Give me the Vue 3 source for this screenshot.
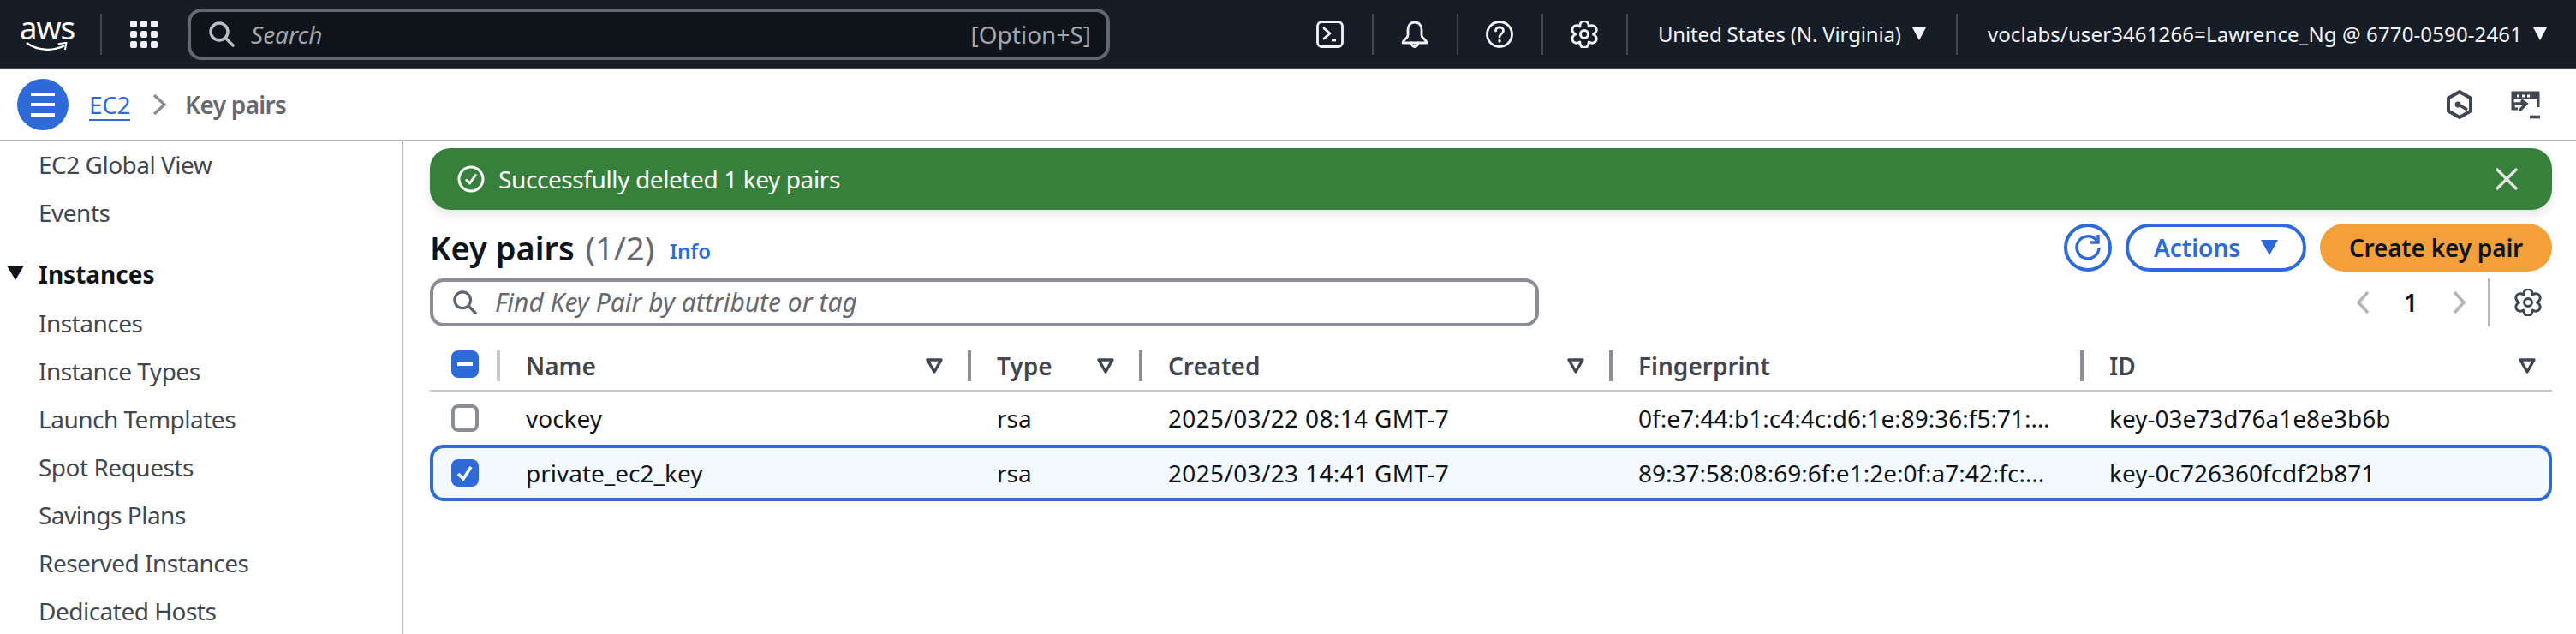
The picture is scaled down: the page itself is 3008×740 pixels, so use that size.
<template>
  <div class="page">
    <header class="topnav">
      <div class="logo">
        <span class="logo-word">aws</span>
        <svg class="logo-smile" viewBox="0 0 64 16" width="64" height="16">
          <path d="M1 2 C 16 13 40 15 58 6" fill="none" stroke="#fff" stroke-width="3" stroke-linecap="round" />
          <path d="M50 3 L62 1 L60 11" fill="none" stroke="#fff" stroke-width="2.6" stroke-linejoin="round" stroke-linecap="round" />
        </svg>
      </div>
      <span class="nav-sep first"></span>
      <svg class="apps" viewBox="0 0 32 32" width="32" height="32">
        <rect v-for="d in appDots" :key="d.k" :x="d.x" :y="d.y" width="8" height="8" rx="2" fill="#f0eff4" />
      </svg>
      <div class="top-search">
        <svg viewBox="0 0 32 32" width="32" height="32">
          <circle cx="13" cy="13" r="10" fill="none" stroke="#b6bec9" stroke-width="3.4" />
          <path d="M20.5 20.5 L29 29" stroke="#b6bec9" stroke-width="3.6" stroke-linecap="round" />
        </svg>
        <span class="top-search-ph">Search</span>
        <span class="top-search-key">[Option+S]</span>
      </div>
      <div class="nav-right">
        <div class="nav-icon">
          <svg viewBox="0 0 32 32" width="32" height="32" fill="none" stroke="#f3f3f7" stroke-width="2.8" stroke-linecap="round" stroke-linejoin="round">
            <rect x="1.5" y="1.5" width="29" height="29" rx="5" />
            <path d="M9 9 L16 15 L9 21" />
            <path d="M18 23 H23" stroke-linecap="butt" />
          </svg>
        </div>
        <span class="nav-sep"></span>
        <div class="nav-icon">
          <svg viewBox="0 0 32 32" width="32" height="32" fill="none" stroke="#f3f3f7" stroke-width="2.8" stroke-linecap="round" stroke-linejoin="round">
            <path d="M16 2 C 10 2 8 7 8 11 V 17 C 8 21 3 21 2 26 H 30 C 29 21 24 21 24 17 V 11 C 24 7 22 2 16 2 Z" />
            <path d="M12 26 C 12 32 20 32 20 26" />
          </svg>
        </div>
        <span class="nav-sep"></span>
        <div class="nav-icon">
          <svg viewBox="0 0 32 32" width="32" height="32" fill="none" stroke="#f3f3f7" stroke-width="2.8" stroke-linecap="round">
            <circle cx="16" cy="16" r="14.5" />
            <path d="M11.5 12 C 11.5 6.5 20.5 6.5 20.5 12 C 20.5 15.5 16 15.5 16 19" />
            <path d="M16 23.5 V 24" stroke-width="3.4" />
          </svg>
        </div>
        <span class="nav-sep"></span>
        <div class="nav-icon">
          <svg viewBox="0 0 32 32" width="32" height="32" fill="none" stroke="#f3f3f7" stroke-width="3" stroke-linejoin="round">
            <path :d="gearPath" />
            <circle cx="16" cy="16" r="4.5" />
          </svg>
        </div>
        <span class="nav-sep"></span>
        <span class="nav-menu region">United States (N. Virginia)<i class="caret"></i></span>
        <span class="nav-sep"></span>
        <span class="nav-menu user">voclabs/user3461266=Lawrence_Ng @ 6770-0590-2461<i class="caret"></i></span>
      </div>
    </header>

    <div class="crumbbar">
      <button class="menu-btn">
        <span></span><span></span><span></span>
      </button>
      <a class="crumb-link">EC2</a>
      <svg class="crumb-chev" viewBox="0 0 16 26" width="16" height="26">
        <path d="M2 2 L14 13 L2 24" fill="none" stroke="#8c8c94" stroke-width="3.4" />
      </svg>
      <span class="crumb-cur">Key pairs</span>
      <div class="crumb-icons">
        <svg viewBox="0 0 32 34" width="32" height="34" fill="none" stroke="#414750" stroke-width="4" stroke-linejoin="round">
          <path d="M16 2 L29 9.5 V 24.5 L16 32 L3 24.5 V 9.5 Z" />
          <path d="M15 17 L25 23" stroke-width="3.4" />
          <circle cx="14" cy="17" r="3.4" fill="#414750" stroke="none" />
        </svg>
        <svg viewBox="0 0 34 33" width="34" height="33" fill="none" stroke="#414750" stroke-width="3">
          <path d="M8 21 H2 V 2 H32 V 19" />
          <rect x="2" y="1" width="30" height="9" fill="#414750" stroke="none" />
          <path d="M7 6 H10 M13 6 H16 M19 6 H22" stroke="#fff" stroke-width="3" />
          <path d="M3 21 V 15 H 16 M12 11 L18 15 L10 23" stroke-width="3.4" />
          <path d="M22 30.5 H34" stroke-width="3.6" />
        </svg>
      </div>
    </div>

    <div class="body">
      <nav class="side">
        <template v-for="item in sideItems" :key="item.label">
          <div v-if="item.head" class="side-head"><i class="side-caret"></i>{{ item.label }}</div>
          <div v-else class="side-item">{{ item.label }}</div>
        </template>
      </nav>

      <main class="main">
        <div class="flash">
          <svg viewBox="0 0 32 32" width="32" height="32" fill="none" stroke="#fff" stroke-width="3">
            <circle cx="16" cy="16" r="14" />
            <path d="M10 16.5 L14.5 21 L22 10.5" stroke-linejoin="round" />
          </svg>
          <span class="flash-text">Successfully deleted 1 key pairs</span>
          <svg class="flash-close" viewBox="0 0 28 28" width="28" height="28">
            <path d="M2 2 L26 26 M26 2 L2 26" stroke="#e6e6e6" stroke-width="3.2" />
          </svg>
        </div>

        <div class="titlebar">
          <h1 class="title">Key pairs <span class="count">(1/2)</span></h1>
          <a class="info">Info</a>
          <div class="actions">
            <button class="btn-round">
              <svg viewBox="0 0 32 32" width="32" height="32" fill="none" stroke="#2e6ad8" stroke-width="3.4">
                <path d="M26 7.5 A 13 13 0 1 0 29 16" />
                <path d="M28 1 V 10 H 19" />
              </svg>
            </button>
            <button class="btn-actions">Actions<i class="btn-caret"></i></button>
            <button class="btn-primary">Create key pair</button>
          </div>
        </div>

        <div class="filterbar">
          <div class="filter">
            <svg viewBox="0 0 32 32" width="30" height="30">
              <circle cx="13" cy="13" r="10" fill="none" stroke="#5f6570" stroke-width="3.4" />
              <path d="M20.5 20.5 L29 29" stroke="#5f6570" stroke-width="3.6" stroke-linecap="round" />
            </svg>
            <span class="filter-ph">Find Key Pair by attribute or tag</span>
          </div>
          <div class="pager">
            <svg viewBox="0 0 16 28" width="16" height="28"><path d="M14 2 L3 14 L14 26" fill="none" stroke="#b4b4bb" stroke-width="3.6" /></svg>
            <span class="pager-num">1</span>
            <svg viewBox="0 0 16 28" width="16" height="28"><path d="M2 2 L13 14 L2 26" fill="none" stroke="#b4b4bb" stroke-width="3.6" /></svg>
            <span class="pager-sep"></span>
            <svg class="pager-gear" viewBox="0 0 32 32" width="32" height="32" fill="none" stroke="#414750" stroke-width="3" stroke-linejoin="round">
              <path :d="gearPath" />
              <circle cx="16" cy="16" r="4.5" />
            </svg>
          </div>
        </div>

        <div class="table">
          <div class="row head">
            <div class="cell check">
              <span class="box on"><i class="minus"></i></span>
            </div>
            <div v-for="col in columns" :key="col.label" class="cell hcell">
              <span>{{ col.label }}</span>
              <svg v-if="col.sortable" viewBox="0 0 20 18" width="20" height="18">
                <path d="M2 2 H18 L10 16 Z" fill="none" stroke="#414750" stroke-width="3.4" stroke-linejoin="round" />
              </svg>
            </div>
          </div>
          <div v-for="row in rows" :key="row.id" class="row data" :class="{ selected: row.selected }">
            <div class="cell check">
              <span class="box" :class="{ on: row.selected }">
                <svg v-if="row.selected" viewBox="0 0 32 32" width="32" height="32">
                  <path d="M8 17 L14 23 L23 9" fill="none" stroke="#fff" stroke-width="3.6" />
                </svg>
              </span>
            </div>
            <div class="cell">{{ row.name }}</div>
            <div class="cell">{{ row.type }}</div>
            <div class="cell date">{{ row.created }}</div>
            <div class="cell">{{ row.fingerprint }}</div>
            <div class="cell">{{ row.id }}</div>
          </div>
        </div>
      </main>
    </div>
  </div>
</template>

<script setup>
const appDots = []
for (let r = 0; r < 3; r++) {
  for (let c = 0; c < 3; c++) {
    appDots.push({ k: r + '-' + c, x: c * 12, y: r * 12 })
  }
}

// six rounded lobes, one pointing straight up
function makeGear() {
  const pt = (deg, rad) => {
    const a = (deg * Math.PI) / 180
    return (16 + rad * Math.cos(a)).toFixed(2) + ' ' + (16 + rad * Math.sin(a)).toFixed(2)
  }
  let d = 'M' + pt(-120, 10.5)
  for (let i = 0; i < 6; i++) {
    const mid = -90 + i * 60
    d += ' C' + pt(mid - 17, 18.5) + ' ' + pt(mid + 17, 18.5) + ' ' + pt(mid + 30, 10.5)
  }
  return d + ' Z'
}
const gearPath = makeGear()

const sideItems = [
  { label: 'EC2 Global View' },
  { label: 'Events' },
  { label: 'Instances', head: true },
  { label: 'Instances' },
  { label: 'Instance Types' },
  { label: 'Launch Templates' },
  { label: 'Spot Requests' },
  { label: 'Savings Plans' },
  { label: 'Reserved Instances' },
  { label: 'Dedicated Hosts' }
]

const columns = [
  { label: 'Name', sortable: true },
  { label: 'Type', sortable: true },
  { label: 'Created', sortable: true },
  { label: 'Fingerprint', sortable: false },
  { label: 'ID', sortable: true }
]

const rows = [
  {
    name: 'vockey',
    type: 'rsa',
    created: '2025/03/22 08:14 GMT-7',
    fingerprint: '0f:e7:44:b1:c4:4c:d6:1e:89:36:f5:71:…',
    id: 'key-03e73d76a1e8e3b6b',
    selected: false
  },
  {
    name: 'private_ec2_key',
    type: 'rsa',
    created: '2025/03/23 14:41 GMT-7',
    fingerprint: '89:37:58:08:69:6f:e1:2e:0f:a7:42:fc:…',
    id: 'key-0c726360fcdf2b871',
    selected: true
  }
]
</script>

<style>
html, body {
  margin: 0;
  background: #fff;
  overflow: hidden;
}
</style>

<style scoped>
.page {
  width: 3008px;
  height: 740px;
  overflow: hidden;
  display: flex;
  flex-direction: column;
  font-family: "Noto Sans", "Open Sans", sans-serif;
  font-size: 28px;
  line-height: 40px;
  color: #0f141a;
}

button {
  font-family: inherit;
  cursor: pointer;
}

/* top bar */
.topnav {
  height: 79px;
  flex: none;
  border-bottom: 2px solid #414750;
  background: #161d26;
  display: flex;
  align-items: center;
  padding-left: 23px;
  padding-right: 34px;
  color: #f3f3f7;
}

.logo {
  width: 64px;
  height: 44px;
  display: flex;
  flex-direction: column;
  align-items: center;
  margin-top: -2px;
}

.logo-word {
  font-size: 37px;
  line-height: 30px;
  height: 30px;
  color: #fff;
  letter-spacing: -1px;
}

.logo-smile {
  margin-top: 2px;
}

.nav-sep {
  width: 2px;
  height: 48px;
  background: #424650;
  flex: none;
}

.nav-sep.first {
  margin-left: 30px;
}

.apps {
  margin-left: 33px;
}

.top-search {
  margin-left: 35px;
  width: 1077px;
  height: 60px;
  box-sizing: border-box;
  border: 4px solid #656871;
  border-radius: 16px;
  background: #0f141a;
  display: flex;
  align-items: center;
  padding: 0 18px 0 20px;
}

.top-search-ph {
  margin-left: 18px;
  font-style: italic;
  color: #a4a4ad;
}

.top-search-key {
  margin-left: auto;
  color: #a4a4ad;
}

.nav-right {
  margin-left: auto;
  display: flex;
  align-items: center;
}

.nav-icon {
  width: 97px;
  display: flex;
  justify-content: center;
}

.nav-menu {
  display: flex;
  align-items: center;
  white-space: nowrap;
  font-size: 24px;
  padding-left: 35px;
}

.region {
  letter-spacing: -0.15px;
  padding-right: 35px;
}

.user {
  letter-spacing: 0.12px;
}

.caret {
  margin-left: 13px;
  width: 0;
  height: 0;
  border-left: 8px solid transparent;
  border-right: 8px solid transparent;
  border-top: 15px solid #f3f3f7;
}

/* breadcrumb bar */
.crumbbar {
  height: 82px;
  flex: none;
  border-bottom: 2px solid #b4b4bb;
  display: flex;
  align-items: center;
  padding: 0 42px 0 20px;
  background: #fff;
}

.menu-btn {
  width: 60px;
  height: 60px;
  border: none;
  border-radius: 50%;
  background: #2e6ad8;
  display: flex;
  flex-direction: column;
  align-items: center;
  justify-content: center;
  gap: 8px;
  padding: 0;
}

.menu-btn span {
  width: 28px;
  height: 4px;
  background: #fff;
}

.crumb-link {
  margin-left: 24px;
  color: #2e6ad8;
  text-decoration: underline;
  text-underline-offset: 6px;
  text-decoration-thickness: 2px;
  letter-spacing: -0.4px;
}

.crumb-chev {
  margin-left: 26px;
}

.crumb-cur {
  margin-left: 22px;
  font-weight: 600;
  letter-spacing: -0.7px;
  color: #656871;
}

.crumb-icons {
  margin-left: auto;
  display: flex;
  align-items: center;
  gap: 44px;
}

/* content */
.body {
  flex: 1;
  display: flex;
  min-height: 0;
}

.side {
  width: 469px;
  flex: none;
  border-right: 2px solid #b4b4bb;
  margin-top: -1px;
  color: #414750;
}

.side-item {
  height: 56px;
  line-height: 56px;
  padding-left: 45px;
  white-space: nowrap;
  letter-spacing: -0.5px;
}

.side-head {
  height: 57px;
  line-height: 56px;
  margin-top: 16px;
  padding-left: 45px;
  position: relative;
  font-weight: 700;
  color: #0f141a;
}

.side-caret {
  position: absolute;
  left: 8px;
  top: 18px;
  width: 0;
  height: 0;
  border-left: 10px solid transparent;
  border-right: 10px solid transparent;
  border-top: 17px solid #0f141a;
}

.main {
  flex: 1;
  min-width: 0;
  padding: 8px 28px 0 31px;
}

.flash {
  height: 72px;
  box-sizing: border-box;
  border-radius: 24px;
  background: #37803b;
  box-shadow: 0 6px 12px rgba(0, 7, 22, 0.1);
  display: flex;
  align-items: center;
  padding: 0 39px 0 32px;
  color: #fff;
  gap: 16px;
}

.flash-text {
  letter-spacing: -0.4px;
}

.flash-close {
  margin-left: auto;
}

.titlebar {
  margin-top: 16px;
  height: 56px;
  display: flex;
  align-items: center;
}

.title {
  margin: 0;
  font-size: 38px;
  line-height: 44px;
  font-weight: 600;
  color: #0f141a;
}

.count {
  font-weight: 400;
  margin-left: 3px;
  color: #656871;
}

.info {
  margin-left: 18px;
  margin-top: 8px;
  font-size: 24px;
  font-weight: 600;
  color: #2e6ad8;
}

.actions {
  margin-left: auto;
  display: flex;
  gap: 16px;
}

.btn-round {
  width: 56px;
  height: 56px;
  box-sizing: border-box;
  border: 4px solid #2e6ad8;
  border-radius: 50%;
  background: #fff;
  padding: 0;
  display: flex;
  align-items: center;
  justify-content: center;
}

.btn-actions {
  width: 211px;
  height: 56px;
  box-sizing: border-box;
  border: 4px solid #2e6ad8;
  border-radius: 40px;
  background: #fff;
  color: #2e6ad8;
  font-size: 28px;
  font-weight: 600;
  display: flex;
  align-items: center;
  justify-content: center;
  padding: 0;
}

.btn-caret {
  margin-left: 24px;
  width: 0;
  height: 0;
  border-left: 10px solid transparent;
  border-right: 10px solid transparent;
  border-top: 18px solid #2e6ad8;
}

.btn-primary {
  width: 271px;
  height: 56px;
  border: none;
  border-radius: 40px;
  background: #f3a03a;
  color: #0f141a;
  font-size: 28px;
  font-weight: 600;
  letter-spacing: -0.2px;
  padding: 0;
}

.filterbar {
  margin-top: 8px;
  height: 56px;
  display: flex;
  align-items: center;
}

.filter {
  width: 1295px;
  height: 56px;
  box-sizing: border-box;
  border: 4px solid #8c8c94;
  border-radius: 16px;
  display: flex;
  align-items: center;
  padding-left: 22px;
}

.filter-ph {
  margin-left: 20px;
  font-size: 30px;
  font-style: italic;
  color: #656871;
}

.pager {
  margin-left: auto;
  display: flex;
  align-items: center;
  height: 56px;
}

.pager-num {
  margin: 0 41px 0 40px;
  font-weight: 600;
}

.pager-sep {
  margin-left: 25px;
  width: 2px;
  height: 56px;
  background: #b4b4bb;
}

.pager-gear {
  margin-left: 29px;
  margin-right: 12px;
}

.table {
  margin-top: 28px;
}

.row {
  display: grid;
  grid-template-columns: 78px 550px 200px 549px 550px 1fr;
  align-items: center;
}

.head {
  height: 46px;
  border-bottom: 2px solid #c6c6cd;
  align-items: start;
}

.cell {
  padding: 0 34px;
  box-sizing: border-box;
  white-space: nowrap;
  min-width: 0;
}

.date {
  letter-spacing: 0.35px;
}

.cell.check {
  padding: 0 0 0 25px;
  display: flex;
}

.head .check {
  height: 36px;
}

.hcell {
  height: 36px;
  line-height: 36px;
  display: flex;
  align-items: center;
  justify-content: space-between;
  font-weight: 600;
  color: #414750;
  padding-right: 29px;
  padding-left: 30px;
  border-left: 4px solid #8c8c94;
}

.check + .hcell {
  border-left-color: #c6c6cd;
}

.hcell:last-child {
  padding-right: 19px;
}

.data {
  height: 62px;
}

.selected {
  height: 66px;
  box-sizing: border-box;
  border: 4px solid #2e6ad8;
  border-radius: 16px;
  background: #f2f9ff;
  grid-template-columns: 74px 550px 200px 549px 550px 1fr;
}

.selected .check {
  padding-left: 21px;
}

.box {
  width: 32px;
  height: 32px;
  box-sizing: border-box;
  border: 4px solid #8c8c94;
  border-radius: 8px;
  background: #fff;
  display: flex;
  align-items: center;
  justify-content: center;
}

.box.on {
  background: #2e6ad8;
  border: none;
}

.minus {
  width: 18px;
  height: 4px;
  background: #fff;
}
</style>
